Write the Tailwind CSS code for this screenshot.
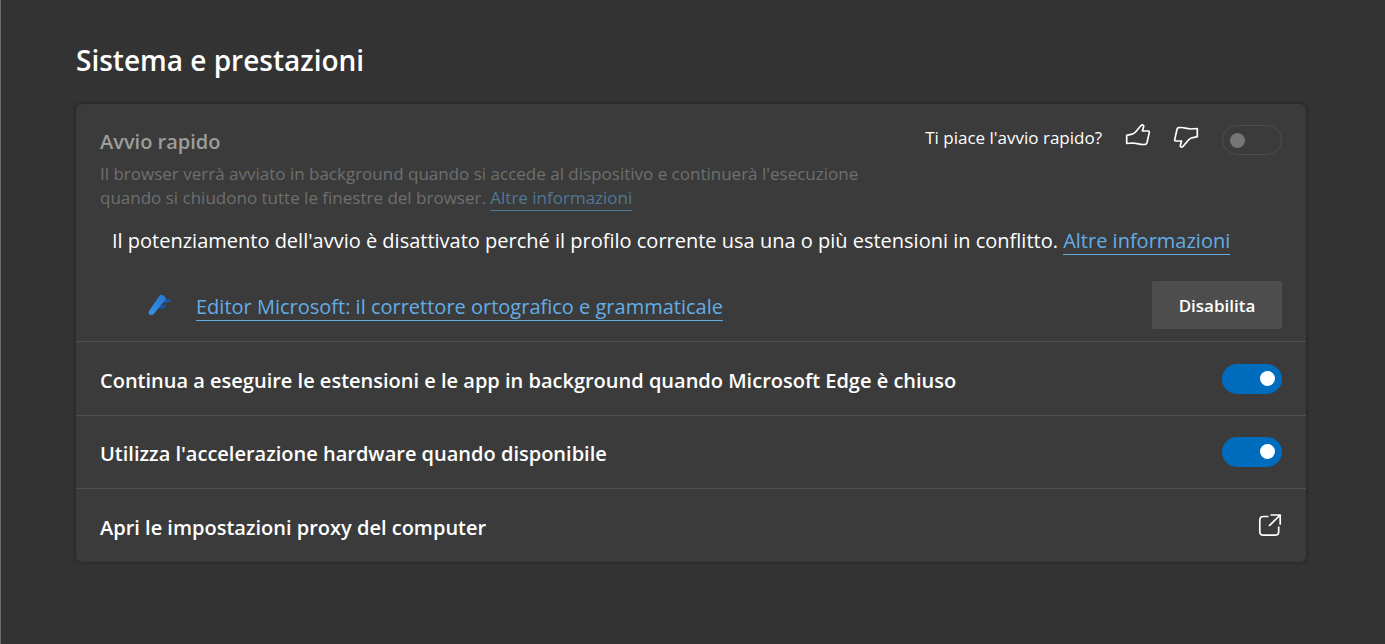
<!DOCTYPE html>
<html lang="it">
<head>
<meta charset="UTF-8" />
<meta name="viewport" content="width=device-width, initial-scale=1.0" />
<title>Impostazioni | Sistema e prestazioni</title>
<script src="https://cdn.jsdelivr.net/npm/@tailwindcss/browser@4"></script>
</head>

<body class="bg-[#333333] text-white font-['Open_Sans','Noto_Sans',sans-serif]">
  <main class="min-h-screen border-l border-[#6a6a6a] pl-[75px] pr-[79px] pt-10 pb-10">
    <h1 class="text-[28px] leading-10 font-semibold">Sistema e prestazioni</h1>

    <div class="mt-6 rounded-md bg-[#3b3b3b] shadow-[0_0_4px_rgba(0,0,0,0.4)] divide-y divide-[#505050]">

      <!-- Avvio rapido -->
      <section class="px-6 pt-5 pb-3">
        <div class="flex items-start justify-between">
          <div>
            <h2 id="avvio" class="text-[20px] leading-9 font-semibold text-[#9d9d9d]">Avvio rapido</h2>
            <p class="mt-0.5 text-[17px] leading-6 text-[#6f6f6f]">
              Il browser verrà avviato in background quando si accede al dispositivo e continuerà l'esecuzione<br />
              quando si chiudono tutte le finestre del browser.
              <a href="#" class="inline-block border-b border-[#4f7896] text-[#4f7896]">Altre informazioni</a>
            </p>
          </div>
          <div class="flex shrink-0 items-start">
            <span class="text-[17px] leading-7">Ti piace l'avvio rapido?</span>
            <button type="button" aria-label="Mi piace" class="ml-[23px] -mt-px">
              <svg class="size-[26px]" viewBox="0 0 26 26" fill="none" stroke="currentColor" stroke-width="1.7" stroke-linejoin="round">
                <path d="M1.7 12.3 7 11.2Q9 10.6 10.5 9L16.3 2.3Q17.3 1.400 18.4 2.3 18.9 2.8 18.7 3.600L17.4 8H23.300Q24.600 8.100 24.300 9.400L21.900 20Q21.500 21.100 20.300 21.300 17 21.800 13.500 20.900L8 20 1.700 20.500Z" />
              </svg>
            </button>
            <button type="button" aria-label="Non mi piace" class="ml-[22px] -mt-px">
              <svg class="size-[26px] rotate-180" viewBox="0 0 26 26" fill="none" stroke="currentColor" stroke-width="1.7" stroke-linejoin="round">
                <path d="M1.7 12.3 7 11.2Q9 10.6 10.5 9L16.3 2.3Q17.3 1.400 18.4 2.3 18.9 2.8 18.7 3.600L17.4 8H23.300Q24.600 8.100 24.300 9.400L21.900 20Q21.500 21.100 20.300 21.300 17 21.800 13.500 20.900L8 20 1.700 20.500Z" />
              </svg>
            </button>
            <input type="checkbox" role="switch" aria-labelledby="avvio" disabled class="ml-[23px] mt-px h-[30px] w-[60px] appearance-none rounded-full border border-[#4d4d4d] before:ml-[7px] before:mt-[7px] before:block before:size-[15px] before:rounded-full before:bg-[#767676]" />
          </div>
        </div>

        <p class="mt-4 pl-3 text-[20px] leading-7">
          Il potenziamento dell'avvio è disattivato perché il profilo corrente usa una o più estensioni in conflitto.
          <a href="#" class="inline-block border-b border-[#63ade5] leading-[27px] text-[#63ade5]">Altre informazioni</a>
        </p>

        <!-- Estensione in conflitto -->
        <div class="mt-[26px] flex items-center pl-12">
          <svg class="size-6 shrink-0" viewBox="0 0 24 24">
            <defs>
              <linearGradient id="bar" x1="0" y1="1" x2="1" y2="0">
                <stop offset="0" stop-color="#3594e4" />
                <stop offset="1" stop-color="#2478d0" />
              </linearGradient>
            </defs>
            <path d="M14 6H22Q23.8 6.200 22.800 7.600L21.800 8.800Q21 9.800 19.800 9.800H11Z" fill="#2054a4" />
            <path d="M10 11.800H17.300Q19 12 18 13.500L17 14.800Q16.200 15.800 15 15.800H6Z" fill="#1f519d" />
            <path d="M11.700 2.500Q13.200 1 14.800 2.100L17.200 4Q18.400 5.200 17.500 6.500L6 20.800Q4.500 22.400 2.800 21.900L1.300 21.200Q0 20 1 18Z" fill="url(#bar)" />
          </svg>
          <a href="#" class="ml-6 border-b border-[#63ade5] pt-1 text-[20px] leading-[27px] text-[#63ade5]">Editor Microsoft: il correttore ortografico e grammaticale</a>
          <button type="button" class="ml-auto h-12 w-[130px] rounded-xs bg-[#4d4d4d] pt-0.5 text-[17px] font-semibold">Disabilita</button>
        </div>
      </section>

      <label class="flex items-center justify-between px-6 pt-5 pb-[19px]">
        <span class="pt-1 text-[20px] leading-[30px] font-semibold">Continua a eseguire le estensioni e le app in background quando Microsoft Edge è chiuso</span>
        <input type="checkbox" role="switch" checked class="h-[30px] w-[60px] shrink-0 appearance-none rounded-full bg-[#006cbe] before:ml-[38px] before:mt-[7px] before:block before:size-[15px] before:rounded-full before:bg-white" />
      </label>

      <label class="flex items-center justify-between px-6 py-[19px]">
        <span class="pt-1 text-[20px] leading-[30px] font-semibold">Utilizza l'accelerazione hardware quando disponibile</span>
        <input type="checkbox" role="switch" checked class="h-[30px] w-[60px] shrink-0 appearance-none rounded-full bg-[#006cbe] before:ml-[38px] before:mt-[7px] before:block before:size-[15px] before:rounded-full before:bg-white" />
      </label>

      <a href="#" class="flex items-center justify-between px-6 pt-5 pb-[19px]">
        <span class="pt-1 text-[20px] leading-[30px] font-semibold">Apri le impostazioni proxy del computer</span>
        <svg class="size-6 shrink-0" viewBox="0 0 24 24" fill="none" stroke="currentColor" stroke-width="1.7" stroke-linejoin="round">
          <path d="M10.500 2.500H5.500Q1.800 2.500 1.800 6.200V17.500Q1.800 21.200 5.500 21.200H17Q20.700 21.200 20.700 17.500V12.500" />
          <path d="M12.500 1H22.200V10.800M22.200 1 11 12" />
        </svg>
      </a>
    </div>
  </main>
</body>
</html>
